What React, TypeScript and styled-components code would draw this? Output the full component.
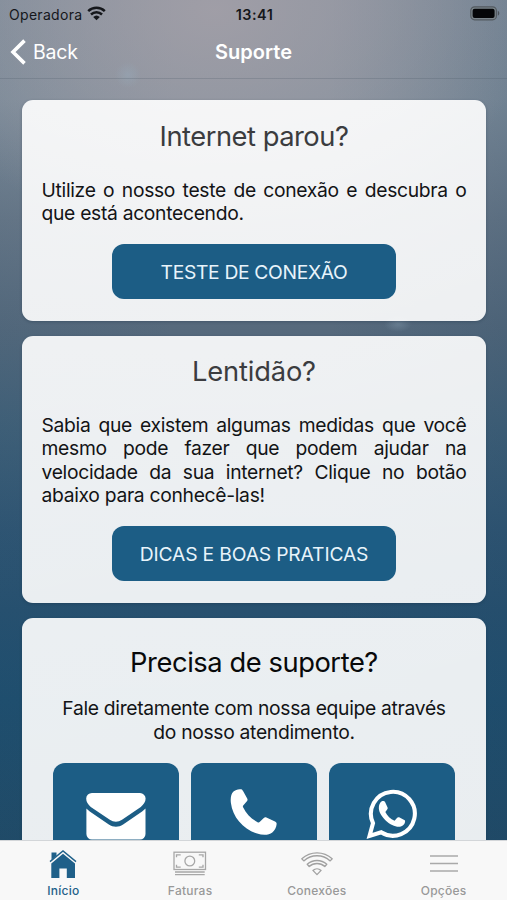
import React from "react";
import styled, { createGlobalStyle } from "styled-components";

const BLUE = "#1c5d85";

const GlobalStyle = createGlobalStyle`
  * { box-sizing: border-box; }
  body { margin: 0; font-family: Inter, "Liberation Sans", sans-serif; }
`;

const Screen = styled.div`
  width: 507px;
  height: 900px;
  overflow: hidden;
  display: flex;
  flex-direction: column;
  background:
    radial-gradient(circle at 128px 75px, rgba(150, 168, 184, 0.5), rgba(150, 165, 182, 0) 13px),
    radial-gradient(ellipse 14px 8px at 398px 324px, rgba(125, 148, 167, 0.5), rgba(125, 148, 167, 0)),
    radial-gradient(ellipse 320px 230px at 215px 10px, rgba(164, 160, 168, 0.85), rgba(160, 156, 166, 0)),
    linear-gradient(90deg, rgba(30, 80, 110, 0.1), rgba(30, 80, 110, 0) 35%, rgba(30, 70, 100, 0) 65%, rgba(30, 70, 100, 0.2)),
    linear-gradient(180deg, #87919e 0, #84909d 100px, #6a7888 220px, #56697c 330px, #416078 430px, #305573 530px, #27506f 610px, #1f4e6e 700px, #204a67 840px);
`;

const StatusBar = styled.div`
  flex: none;
  height: 28px;
  padding: 0 7px 0 9px;
  display: grid;
  grid-template-columns: 1fr auto 1fr;
  align-items: center;
  color: #15171b;
  font-size: 14px;
  line-height: 27px;
`;

const Carrier = styled.div`
  display: flex;
  align-items: center;
  gap: 5px;
  letter-spacing: 0.3px;
  svg { margin-bottom: 2px; }
`;

const Clock = styled.div`
  font-size: 14.4px;
  font-weight: 600;
  letter-spacing: 0.5px;
`;

const Battery = styled.div`
  display: flex;
  justify-content: flex-end;
  padding-bottom: 2px;
`;

const NavBar = styled.div`
  flex: none;
  height: 51px;
  padding: 0 10px;
  display: grid;
  grid-template-columns: 1fr auto 1fr;
  align-items: center;
  border-bottom: 1px solid rgba(70, 80, 95, 0.22);
  color: #fff;
  font-size: 19.5px;
  line-height: 24px;
`;

const BackButton = styled.div`
  display: flex;
  align-items: center;
  gap: 7px;
  padding-bottom: 2px;
  letter-spacing: -0.2px;
`;

const NavTitle = styled.div`
  padding-bottom: 2px;
  font-size: 20px;
  font-weight: 600;
`;

const Content = styled.main`
  flex: 1;
  min-height: 0;
  overflow: hidden;
  padding: 21px 21px 0 22px;
  display: flex;
  flex-direction: column;
  gap: 15px;
`;

const Card = styled.section<{ $top?: number }>`
  flex: none;
  padding: ${(p) => p.$top ?? 20.6}px 20px 22px;
  display: flex;
  flex-direction: column;
  align-items: center;
  border-radius: 11px;
  background: linear-gradient(165deg, rgba(255, 255, 255, 0.91), rgba(255, 255, 255, 0.9));
  box-shadow: 0 1px 3px rgba(20, 40, 60, 0.3);
`;

const Heading = styled.h2<{ $color?: string; $tracking?: number; $gap?: number }>`
  margin: 0 0 ${(p) => p.$gap ?? 26}px;
  color: ${(p) => p.$color ?? "#3b3c3f"};
  font-size: 27.3px;
  font-weight: 400;
  line-height: 32px;
  letter-spacing: ${(p) => p.$tracking ?? -0.48}px;
`;

const Copy = styled.p<{ $centered?: boolean }>`
  width: ${(p) => (p.$centered ? 396 : 425)}px;
  margin: 0 0 18.9px;
  color: #131416;
  font-size: 19.3px;
  line-height: 23.3px;
  letter-spacing: -0.31px;
  text-align: ${(p) => (p.$centered ? "center" : "justify")};
`;

const ActionButton = styled.button<{ $tracking: number }>`
  width: 284px;
  height: 54.5px;
  padding: 1px 0 0;
  border: 0;
  border-radius: 12px;
  background: ${BLUE};
  color: #e8f4fb;
  font-family: inherit;
  font-size: 19.3px;
  letter-spacing: ${(p) => p.$tracking}px;
`;

const Channels = styled.div`
  display: flex;
  gap: 12.3px;
`;

const ChannelTile = styled.div`
  width: 125.6px;
  height: 126px;
  padding-top: 20px;
  display: flex;
  justify-content: center;
  border-radius: 12px;
  background: ${BLUE};
  svg { display: block; overflow: visible; }
`;

const TabBar = styled.nav`
  flex: none;
  height: 60.5px;
  padding-top: 9px;
  display: grid;
  grid-template-columns: repeat(4, 1fr);
  border-top: 1px solid #d3d6d9;
  background: #f8f8f8;
`;

const Tab = styled.div<{ $active?: boolean }>`
  display: flex;
  flex-direction: column;
  align-items: center;
  gap: 4px;
  color: ${(p) => (p.$active ? "#1f6089" : "#999")};
  font-size: 12px;
  font-weight: 500;
  line-height: 15px;
  letter-spacing: 0.25px;
  svg { display: block; }
`;

const WifiSolid = () => (
  <svg width="19" height="15" viewBox="0 0 19 15" fill="none" stroke="currentColor" strokeWidth="2.5">
    <path d="M1.2 5.2a12 12 0 0 1 16.6 0" />
    <path d="M4 8.5a8 8 0 0 1 11 0" />
    <path d="M9.5 14.2L6.2 11a4.8 4.8 0 0 1 6.6 0z" fill="currentColor" stroke="none" />
  </svg>
);

const BatteryIcon = () => (
  <svg width="30" height="15" viewBox="0 0 30 15">
    <rect x="0.8" y="0.8" width="25.6" height="13" rx="3.8" fill="#7b858b" stroke="#535a60" strokeWidth="1.2" />
    <rect x="2.6" y="2.7" width="22" height="9.2" rx="2" fill="#050608" />
    <path d="M27.8 4.8c2 .7 2 4.3 0 5z" fill="#4c5359" />
  </svg>
);

const ChevronLeft = () => (
  <svg width="16" height="26" viewBox="0 0 16 26" fill="none" stroke="#fff" strokeWidth="3.6">
    <path d="M14.5 1.600L3 13l11.500 11.400" />
  </svg>
);

const MailIcon = () => (
  <svg width="60" height="52" viewBox="0 0 60 52" fill="#fff">
    <path d="M6 10h48a5.600 5.600 0 0 1 5.600 5.600c0 3.300-2 6.200-4.800 8.300L36 36.800c-3.800 2.600-8.400 2.600-12.200 0L4.800 23.900C2 21.800.2 18.900.2 15.600A5.700 5.700 0 0 1 6 10z" />
    <path d="M.4 25.600c1 1.100 2.200 2.100 3.400 2.900l19 13c4.500 3 9.800 3 14.300 0l19-13c1.200-.8 2.400-1.800 3.400-2.900V51a5.500 5.500 0 0 1-5.500 5.500H6A5.500 5.500 0 0 1 .4 51z" />
  </svg>
);

const PhoneIcon = () => (
  <svg width="48" height="54" viewBox="0 0 48 54" fill="#fff">
    <path d="M3.500 8.500C5.300 6.700 8.700 5.700 11.200 6.300c1 .3 1.500 1.200 2 2l4 7.200c.6 1.100.4 2-.3 2.800l-3.700 4.300c-.4.500-.4 1-.1 1.600 3.300 6.800 7.800 11.500 14.900 15.200.7.300 1.200.2 1.600-.3l4.200-4.200c.8-.8 1.600-1 2.600-.5l8.600 4.200c1.200.6 1.800 1.400 1.600 2.700-.2 3-1.900 6.500-4.300 8.200-3.600 2.900-9.500 3-15.200 1C13.500 46.500 2.500 34 .9 20c-.6-4.600.1-9.200 2.600-11.500z" />
  </svg>
);

const WhatsAppIcon = () => (
  <svg width="50" height="56" viewBox="0 0 51.5 56" preserveAspectRatio="xMinYMin" fill="none">
    <path
      d="M2.600 54.500l3.600-13.200A22.600 22.600 0 1 1 14.600 50.800z"
      stroke="#fff"
      strokeWidth="4.200"
    />
    <path
      fill="#fff"
      d="M15.200 18.800c1-.5 2.700-.5 3.400.7l2.600 5.800c.4 1-.1 1.600-.6 2.300l-1.700 2.200c2 4 5.200 7.100 9.500 9l2.700-3c.6-.7 1.200-.7 2-.4l5.300 2.700c.8.4 1 .8.8 1.700-.5 3.400-3.500 5.200-6.400 5.200-8.600 0-20-10.400-20.600-18.800-.1-2.900.8-5.900 3-7.400z"
    />
  </svg>
);

const HomeIcon = () => (
  <svg width="28" height="29" viewBox="0 0 28 29">
    <path fill="currentColor" d="M2.500 2.500h5v3.300l-5 3.900z" />
    <path d="M1 11.600L14 1l13 10.600" fill="none" stroke="currentColor" strokeWidth="1.400" />
    <path fill="currentColor" d="M14 3.800l12 9.800V28h-8.200v-9.600h-7.400V28H2.300V13.400z" />
  </svg>
);

const MoneyIcon = () => (
  <svg width="34" height="29" viewBox="0 0 34 29" fill="none" stroke="#a7a7a7" strokeWidth="1.300">
    <rect x="1" y="2.200" width="31.500" height="17.300" />
    <circle cx="16.800" cy="11" r="4.900" />
    <path d="M3.500 7.200V4.800h4.200M25.800 4.800H30v2.400M3.500 14.800v2.400h4.200M25.800 17.200H30v-2.400" />
    <path d="M2 22h29.700M2 24.600h29.700" />
  </svg>
);

const WifiOutline = () => (
  <svg width="34" height="29" viewBox="0 0 34 29" fill="none" stroke="#a1a1a1" strokeWidth="1.300" strokeLinejoin="round">
    <path d="M1.800 8.700a22.500 22.500 0 0 1 30.400 0l-2 2.200a19.500 19.500 0 0 0-26.400 0z" />
    <path d="M7.200 14.300a14.600 14.600 0 0 1 19.600 0l-2 2.200a11.600 11.600 0 0 0-15.600 0z" />
    <path d="M12.900 20.400a6.200 6.200 0 0 1 8.200 0L17 24.600z" />
  </svg>
);

const MenuIcon = () => (
  <svg width="28" height="29" viewBox="0 0 28 29" fill="none" stroke="#a9a9a9" strokeWidth="1.700">
    <path d="M0 6h28M0 13.500h28M0 21h28" />
  </svg>
);

export default function App() {
  return (
    <>
      <GlobalStyle />
      <Screen>
        <StatusBar>
          <Carrier>
            Operadora
            <WifiSolid />
          </Carrier>
          <Clock>13:41</Clock>
          <Battery>
            <BatteryIcon />
          </Battery>
        </StatusBar>
        <NavBar>
          <BackButton>
            <ChevronLeft />
            Back
          </BackButton>
          <NavTitle>Suporte</NavTitle>
        </NavBar>
        <Content>
          <Card>
            <Heading>Internet parou?</Heading>
            <Copy>Utilize o nosso teste de conexão e descubra o que está acontecendo.</Copy>
            <ActionButton $tracking={-0.34}>TESTE DE CONEXÃO</ActionButton>
          </Card>
          <Card>
            <Heading $tracking={-0.18}>Lentidão?</Heading>
            <Copy>
              Sabia que existem algumas medidas que você mesmo pode fazer que podem ajudar na
              velocidade da sua internet? Clique no botão abaixo para conhecê-las!
            </Copy>
            <ActionButton $tracking={-0.17}>DICAS E BOAS PRATICAS</ActionButton>
          </Card>
          <Card $top={29.6}>
            <Heading $color="#08090a" $gap={18} $tracking={-0.43}>Precisa de suporte?</Heading>
            <Copy $centered>
              Fale diretamente com nossa equipe através do nosso atendimento.
            </Copy>
            <Channels>
              <ChannelTile><MailIcon /></ChannelTile>
              <ChannelTile><PhoneIcon /></ChannelTile>
              <ChannelTile><WhatsAppIcon /></ChannelTile>
            </Channels>
          </Card>
        </Content>
        <TabBar>
          <Tab $active><HomeIcon />Início</Tab>
          <Tab><MoneyIcon />Faturas</Tab>
          <Tab><WifiOutline />Conexões</Tab>
          <Tab><MenuIcon />Opções</Tab>
        </TabBar>
      </Screen>
    </>
  );
}
